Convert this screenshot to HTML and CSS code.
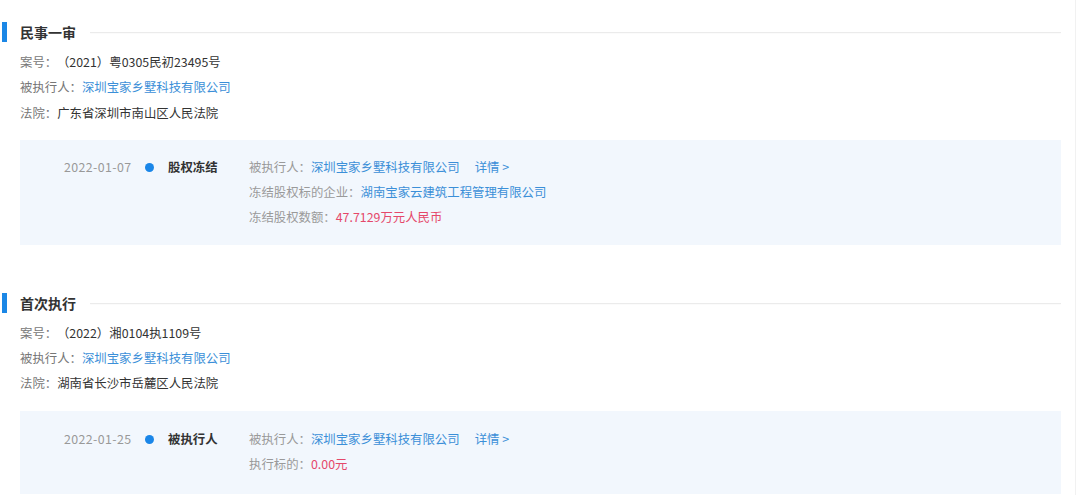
FILE: index.html
```html
<!DOCTYPE html>
<html lang="zh-CN">
<head>
<meta charset="utf-8">
<title>司法信息</title>
<link rel="stylesheet" href="styles.css">
</head>
<body>
<div class="page">
  <section class="sec">
    <div class="sec-head">
      <span class="bar"></span>
      <h2 class="sec-title">民事一审</h2>
      <span class="rule"></span>
    </div>
    <div class="case">
      <div class="row"><span class="lbl">案号：</span><span class="val case-no">（2021）粤0305民初23495号</span></div>
      <div class="row"><span class="lbl">被执行人：</span><a class="link">深圳宝家乡墅科技有限公司</a></div>
      <div class="row"><span class="lbl">法院：</span><span class="val">广东省深圳市南山区人民法院</span></div>
    </div>
    <div class="box">
      <div class="date">2022-01-07</div>
      <div class="dot-cell"><span class="dot"></span></div>
      <div class="ev-title">股权冻结</div>
      <div class="ev-detail">
        <div class="row"><span class="lbl2">被执行人：</span><a class="link">深圳宝家乡墅科技有限公司</a><a class="more">详情 &gt;</a></div>
        <div class="row"><span class="lbl2">冻结股权标的企业：</span><a class="link">湖南宝家云建筑工程管理有限公司</a></div>
        <div class="row"><span class="lbl2">冻结股权数额：</span><span class="red">47.7129万元人民币</span></div>
      </div>
    </div>
  </section>

  <section class="sec sec2">
    <div class="sec-head">
      <span class="bar"></span>
      <h2 class="sec-title">首次执行</h2>
      <span class="rule"></span>
    </div>
    <div class="case">
      <div class="row"><span class="lbl">案号：</span><span class="val case-no">（2022）湘0104执1109号</span></div>
      <div class="row"><span class="lbl">被执行人：</span><a class="link">深圳宝家乡墅科技有限公司</a></div>
      <div class="row"><span class="lbl">法院：</span><span class="val">湖南省长沙市岳麓区人民法院</span></div>
    </div>
    <div class="box box2">
      <div class="date">2022-01-25</div>
      <div class="dot-cell"><span class="dot"></span></div>
      <div class="ev-title">被执行人</div>
      <div class="ev-detail">
        <div class="row"><span class="lbl2">被执行人：</span><a class="link">深圳宝家乡墅科技有限公司</a><a class="more">详情 &gt;</a></div>
        <div class="row"><span class="lbl2">执行标的：</span><span class="red">0.00元</span></div>
      </div>
    </div>
  </section>
</div>
</body>
</html>
```

FILE: styles.css
```css
* { box-sizing: border-box; }
html, body {
  margin: 0;
  padding: 0;
  background: #ffffff;
  height: 100%;
  overflow: hidden;
}
body {
  font-family: "Noto Sans CJK SC", "Noto Sans", sans-serif;
  font-size: 12.4px;
  color: #333333;
}
.page {
  width: 1076px;
  height: 495px;
  padding: 22px 14px 0 2px;
  border-right: 1px solid #f1f1f1;
}
.sec-head {
  display: flex;
  align-items: center;
  height: 20px;
}
.bar {
  width: 5px;
  height: 20px;
  background: #1b87e6;
  margin-right: 13px;
}
.sec-title {
  margin: 0;
  font-size: 14px;
  font-weight: 700;
  color: #333333;
  line-height: 20px;
}
.rule {
  flex: 1;
  height: 1px;
  margin-left: 14px;
  background: #ebebeb;
  box-shadow: 0 1px 1px rgba(0,0,0,0.02);
}
.case {
  margin-top: 8px;
  padding-left: 18px;
}
.row {
  line-height: 25.4px;
  height: 25.4px;
  white-space: nowrap;
}
.lbl { color: #777777; }
.val { color: #333333; }
.case-no { margin-left: 6px; }
.link { color: #3b8fd8; text-decoration: none; }
.more {
  color: #3b8fd8;
  margin-left: 15px;
}
.lbl2 { color: #9a9a9a; }
.red { color: #e5486a; }
.box {
  margin: 14px 0 0 18px;
  width: 1041px;
  background: #f2f7fd;
  padding: 15px 0 15px 44px;
  display: grid;
  grid-template-columns: 81px 9px 95px 1fr;
  column-gap: 0;
}
.date {
  color: #999999;
  line-height: 25px;
  letter-spacing: 0.4px;
}
.dot-cell {
  height: 25px;
  display: flex;
  align-items: center;
}
.dot {
  width: 9px;
  height: 9px;
  border-radius: 50%;
  background: #1a86e8;
}
.ev-title {
  font-weight: 700;
  color: #333333;
  line-height: 25px;
  padding-left: 14px;
}
.ev-detail .row {
  line-height: 25px;
  height: 25px;
}
.sec2 { margin-top: 48px; }
.sec2 .case { margin-top: 8px; }
.sec2 .case .row { line-height: 25px; height: 25px; }
.box2 {
  margin-top: 15px;
  padding-top: 16px;
  padding-bottom: 17px;
}
```
